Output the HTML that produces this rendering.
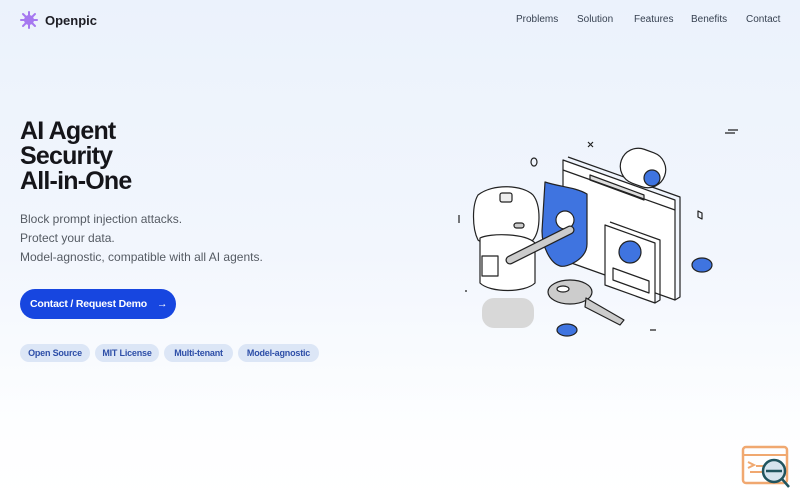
<!DOCTYPE html>
<html><head><meta charset="utf-8"><style>
*{margin:0;padding:0;box-sizing:border-box}
body{width:800px;height:500px;overflow:hidden;font-family:"Liberation Sans","DejaVu Sans",sans-serif;background:linear-gradient(180deg,#ebf2fc 0%,#f2f6fd 50%,#fdfeff 85%,#fff 100%);position:relative;color:#1a1a1a}
.logo{position:absolute;left:20px;top:11px;display:flex;align-items:center;gap:7px;font-weight:bold;font-size:13px;color:#1d1d24}
.nav{position:absolute;top:14px;font-size:10px;color:#374151}
h1{position:absolute;left:20px;top:119px;font-size:25px;line-height:25px;font-weight:bold;letter-spacing:-0.8px;color:#15151a}
.sub{position:absolute;left:20px;top:210px;font-size:12px;line-height:19px;color:#555b63}
.btn{position:absolute;left:20px;top:289px;width:156px;height:30px;border-radius:15px;background:#1746e0;color:#fff;font-size:10.5px;font-weight:bold;display:flex;align-items:center;padding-left:10px;white-space:nowrap;letter-spacing:-0.2px}
.btn span{margin-left:10px}
.tag{position:absolute;top:344px;height:18px;border-radius:9px;background:#dce6f6;color:#2e4fa8;font-size:9px;font-weight:bold;display:flex;align-items:center;justify-content:center;white-space:nowrap;letter-spacing:-0.2px}
</style></head><body>
<div class="logo"><svg width="18" height="18" viewBox="0 0 18 18"><g stroke="#a678f0" stroke-width="2" stroke-linecap="round"><line x1="9" y1="1" x2="9" y2="17"/><line x1="1" y1="9" x2="17" y2="9"/><line x1="3" y1="3" x2="15" y2="15"/><line x1="15" y1="3" x2="3" y2="15"/></g><circle cx="9" cy="9" r="5" fill="#a678f0"/></svg>Openpic</div>
<div class="nav" style="left:516px">Problems</div>
<div class="nav" style="left:577px">Solution</div>
<div class="nav" style="left:634px">Features</div>
<div class="nav" style="left:691px">Benefits</div>
<div class="nav" style="left:746px">Contact</div>
<h1>AI Agent<br>Security<br>All-in-One</h1>
<div class="sub">Block prompt injection attacks.<br>Protect your data.<br>Model-agnostic, compatible with all AI agents.</div>
<div class="btn">Contact / Request Demo<span>→</span></div>
<div class="tag" style="left:20px;width:70px">Open Source</div>
<div class="tag" style="left:95px;width:64px">MIT License</div>
<div class="tag" style="left:164px;width:69px">Multi-tenant</div>
<div class="tag" style="left:238px;width:81px">Model-agnostic</div>

<svg style="position:absolute;left:450px;top:120px" width="300" height="230" viewBox="0 0 300 230" fill="none" stroke="#222" stroke-width="1.2" stroke-linejoin="round">
<path d="M278 10h10M275 13h10"/>
<path d="M138 22l5 5M143 22l-5 5"/>
<ellipse cx="84" cy="42" rx="3" ry="4"/>
<path d="M113 40l112 40v100l-112-40z" fill="#fff"/>
<path d="M118 37l112 40v100l-5 3"/>
<path d="M140 55l54 20v5l-54-20z" fill="#ddd"/>
<path d="M113 50l112 40"/>
<rect x="170" y="30" width="46" height="36" rx="18" fill="#fff" transform="rotate(20 193 48)"/>
<circle cx="202" cy="58" r="8" fill="#3f74e0"/>
<path d="M155 105l50 18v60l-50-18z" fill="#fff"/>
<path d="M160 102l50 18v60l-5 3"/>
<circle cx="180" cy="132" r="11" fill="#3f74e0"/>
<path d="M163 148l36 13v12l-36-13z" fill="#fff"/>
<path d="M95 62c15 5 30 5 42 12v50c0 15-20 24-27 22c-10-3-18-20-18-35z" fill="#3f74e0"/>
<circle cx="115" cy="100" r="9" fill="#fff"/>
<path d="M28 75c15-12 45-10 55 0c8 10 8 35 0 45c-15 10-45 8-55 0c-6-12-6-35 0-45z" fill="#fff"/>
<rect x="50" y="73" width="12" height="9" rx="2" fill="#eee"/>
<rect x="64" y="103" width="10" height="5" rx="2.5" fill="#ccc"/>
<path d="M30 118c10-5 45-5 55 5v40c-10 10-45 10-55 0z" fill="#fff"/>
<rect x="32" y="136" width="16" height="20" fill="#fff"/>
<path d="M60 140l60-30" stroke-width="9" stroke="#222" stroke-linecap="round"/>
<path d="M60 140l60-30" stroke-width="6.5" stroke="#ccc" stroke-linecap="round"/>
<rect x="32" y="178" width="52" height="30" rx="12" fill="#d8d8d8" stroke="none"/>
<ellipse cx="120" cy="172" rx="22" ry="12" fill="#ccc"/>
<ellipse cx="113" cy="169" rx="6" ry="3" fill="#fff"/>
<path d="M136 178l38 22l-4 5l-35-18z" fill="#ccc"/>
<ellipse cx="252" cy="145" rx="10" ry="7" fill="#3f74e0"/>
<ellipse cx="117" cy="210" rx="10" ry="6" fill="#3f74e0"/>
<path d="M248 91l4 2v6l-4-2z"/>
<path d="M9 95v8M15 171h2M200 210h6"/>
</svg>

<svg style="position:absolute;left:740px;top:444px" width="52" height="46" viewBox="0 0 52 46" fill="none">
<rect x="3" y="3" width="44" height="36" rx="3" stroke="#f0a870" stroke-width="2.5"/>
<path d="M3 11h44M8 18l6 3-6 3M16 22h18M10 28h22" stroke="#f0a870" stroke-width="2"/>
<circle cx="34" cy="27" r="11" fill="#d6e4ee" stroke="#20545e" stroke-width="2.5"/>
<path d="M26 27h16M42 35l7 8" stroke="#20545e" stroke-width="2.5"/>
</svg>
</body></html>
